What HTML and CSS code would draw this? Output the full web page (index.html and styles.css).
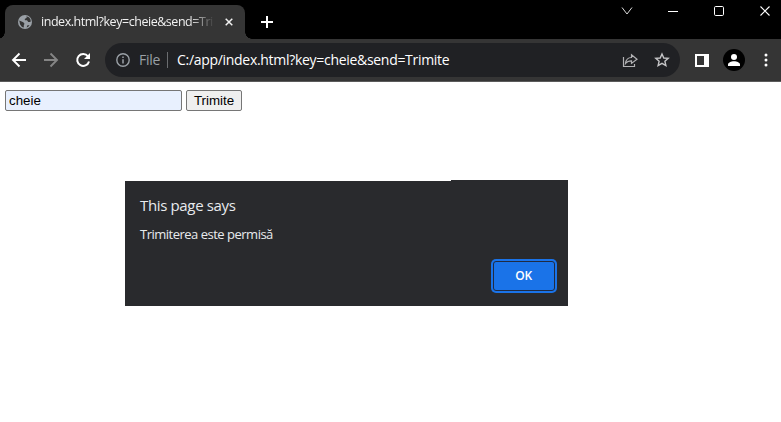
FILE: index.html
```html
<!DOCTYPE html>
<html lang="ro">
<head>
<meta charset="utf-8">
<title>index.html</title>
<link rel="stylesheet" href="styles.css">
</head>
<body>
<header class="titlebar">
  <div class="tab">
    <svg class="globe" width="14" height="14" viewBox="0 0 14 14"><circle cx="7" cy="7" r="7" fill="#9aa0a6"/><path d="M1.300 5.500l4 1.700 1.200 1.500-.7 1.500v2.300l-1.800-.6-2-2.600zM8.500 1.300l.2 1.500-2 1.200.3 1.300h2l1.200 1.600 2.300.2.200-2-1.400-2.500zM8.700 12.400l.5-1.800 2.300-.5-1.200 1.600z" fill="#353535"/></svg>
    <span class="tab-title">index.html?key=cheie&amp;send=Trimite</span>
    <svg class="tab-close" width="8" height="8" viewBox="0 0 8 8"><path d="M.7.7l6.600 6.600M7.300.7L.7 7.300" stroke="#f1f1f1" stroke-width="1.500"/></svg>
  </div>
  <svg class="new-tab" width="12" height="12" viewBox="0 0 12 12"><path d="M6 0v12M0 6h12" stroke="#fff" stroke-width="2"/></svg>
  <div class="window-controls">
    <svg width="12" height="12" viewBox="0 0 12 12"><path d="M1 2.500l5 6.500 5-6.500" fill="none" stroke="#ddd"/></svg>
    <svg width="12" height="12" viewBox="0 0 12 12"><path d="M1 6.500h10" stroke="#fff"/></svg>
    <svg width="12" height="12" viewBox="0 0 12 12"><rect x="1.500" y="1.500" width="9" height="9" rx="1.200" fill="none" stroke="#fff"/></svg>
    <svg width="12" height="12" viewBox="0 0 12 12"><path d="M1.500 1.500l9 9M10.500 1.500l-9 9" stroke="#fff" stroke-width="1.100"/></svg>
  </div>
</header>
<nav class="toolbar">
  <svg class="back" width="16" height="16" viewBox="0 0 16 16"><path d="M15 8H2M8.500 1.500L2 8l6.500 6.500" fill="none" stroke="#fff" stroke-width="1.900"/></svg>
  <svg class="forward" width="16" height="16" viewBox="0 0 16 16"><path d="M1 8h13M7.500 1.500L14 8l-6.500 6.500" fill="none" stroke="#858585" stroke-width="1.900"/></svg>
  <svg class="reload" width="16" height="16" viewBox="0 0 16 16"><path d="M13 4.300A6 6 0 1 0 14 9.500" fill="none" stroke="#fff" stroke-width="2"/><path d="M15 1v6H9z" fill="#fff"/></svg>
  <div class="omnibox">
    <svg class="info" width="14" height="14" viewBox="0 0 14 14"><circle cx="7" cy="7" r="6.200" fill="none" stroke="#9aa0a6" stroke-width="1.400"/><path d="M7 6.200v4.300M7 3.500v1.500" stroke="#9aa0a6" stroke-width="1.500"/></svg>
    <span class="scheme">File</span>
    <span class="divider"></span>
    <span class="url">C:/app/index.html?key=cheie&amp;send=Trimite</span>
    <svg class="share" width="16" height="16" viewBox="0 0 16 16"><path d="M1.500 5v9.500h11V12M3.500 11.500c.5-4 2.500-6 6-6V2.800L15 7.200l-5.500 4.200V8.800c-2.500 0-4.500.7-6 2.700z" fill="none" stroke="#b2b2b4" stroke-width="1.200"/></svg>
    <svg class="star" width="16" height="16" viewBox="0 0 16 16"><path d="M8 2l1.800 4 4.400.4-3.300 2.900 1 4.300L8 11.300l-3.900 2.300 1-4.300-3.300-2.900 4.400-.4z" fill="none" stroke="#c5c5c7" stroke-width="1.400"/></svg>
  </div>
  <svg class="panel" width="14" height="13" viewBox="0 0 14 13"><path fill="#fff" fill-rule="evenodd" d="M0 0h14v13H0zM2 2v9h7V2z"/></svg>
  <svg class="profile" width="22" height="22" viewBox="0 0 22 22"><circle cx="11" cy="11" r="11"/><circle cx="11" cy="8" r="3" fill="#fff"/><path d="M5 17v-1.500c0-2 3-3.300 6-3.300s6 1.300 6 3.300V17z" fill="#fff"/></svg>
  <svg class="more" width="4" height="14" viewBox="0 0 4 14"><g fill="#fff"><circle cx="2" cy="2" r="1.500"/><circle cx="2" cy="7" r="1.500"/><circle cx="2" cy="12" r="1.500"/></g></svg>
</nav>
<main class="page">
  <form class="search" onsubmit="return false">
    <input class="key" type="text" name="key" value="cheie">
    <button class="send" type="submit">Trimite</button>
  </form>
</main>
<section class="dialog" role="alertdialog">
  <h1 class="dialog-title">This page says</h1>
  <p class="dialog-message">Trimiterea este permisă</p>
  <button class="ok">OK</button>
</section>
</body>
</html>
```
FILE: styles.css
```css
* { box-sizing: border-box; }
body {
  margin: 0;
  height: 422px;
  overflow: hidden;
  background: #fff;
  font-family: "Open Sans", "Noto Sans", sans-serif;
}
svg { display: block; flex: none; }
.titlebar {
  display: flex;
  height: 39px;
  padding: 5px 10px 0 5px;
  background: #000;
}
.tab {
  position: relative;
  display: flex;
  align-items: center;
  width: 240px;
  height: 34px;
  padding: 0 12px 0 13px;
  border-radius: 8px 8px 0 0;
  background: #353535;
}
.tab::before, .tab::after {
  content: "";
  position: absolute;
  bottom: 0;
  width: 7px;
  height: 7px;
}
.tab::before { left: -7px; background: radial-gradient(circle at 0 0, #000 6.500px, #353535 7px); }
.tab::after { right: -7px; background: radial-gradient(circle at 100% 0, #000 6.500px, #353535 7px); }
.tab-title {
  width: 172px;
  margin-left: 9px;
  overflow: hidden;
  white-space: nowrap;
  font-size: 12.500px;
  letter-spacing: -.460px;
  line-height: 20px;
  color: #f1f1f1;
  -webkit-mask-image: linear-gradient(90deg, #000 148px, transparent 174px);
  mask-image: linear-gradient(90deg, #000 148px, transparent 174px);
}
.tab-close { margin-left: 12px; }
.new-tab { margin: 11px 0 0 16px; }
.window-controls { display: flex; gap: 34px; margin-left: auto; }
.toolbar {
  display: flex;
  align-items: center;
  height: 43px;
  padding: 0 13px 0 11px;
  background: #353535;
  border-bottom: 1px solid #5b5b5b;
}
.forward, .reload { margin-left: 16px; }
.omnibox {
  display: flex;
  align-items: center;
  width: 575px;
  height: 34px;
  margin-left: 14px;
  padding: 0 10px 0 11px;
  border-radius: 17px;
  background: #202124;
  font-size: 14px;
  letter-spacing: -.300px;
  line-height: 20px;
  white-space: nowrap;
}
.scheme { width: 28px; margin-left: 9px; color: #9aa0a6; }
.divider { width: 1px; height: 16px; background: #6b6d70; }
.url { margin-left: 9px; color: #fff; }
.share { margin-left: auto; }
.star { margin-left: 16px; }
.panel { margin-left: 15px; }
.profile { margin-left: 14px; }
.more { margin-left: auto; }
.page { padding: 8px 5px; }
.search { display: flex; gap: 4px; }
.key, .send {
  height: 21px;
  border: 1px solid #767676;
  border-radius: 2px;
  font: 13.333px "Liberation Sans", Arial, sans-serif;
  color: #000;
}
.key { width: 177px; padding: 0 3px; background: #e8f0fe; outline: none; }
.send { width: 56px; padding: 0; background: #efefef; }
.dialog {
  position: absolute;
  left: 125px;
  top: 181px;
  display: flex;
  flex-direction: column;
  width: 443px;
  height: 125px;
  padding: 14px 12px 14px 15px;
  background: #292a2d;
  color: #e8eaed;
}
.dialog::before {
  content: "";
  position: absolute;
  top: -1px;
  right: 0;
  width: 117px;
  height: 1px;
  background: #292a2d;
}
.dialog-title { margin: 0; font-size: 15px; letter-spacing: -.350px; font-weight: 400; line-height: 21px; }
.dialog-message { margin: 9px 0 0; font-size: 13px; letter-spacing: -.500px; line-height: 18px; }
.ok {
  width: 62px;
  height: 30px;
  margin: auto 1px 1px auto;
  padding: 0 1px 0 0;
  border: 1px solid #202b42;
  border-radius: 3px;
  background: #1a73e8;
  box-shadow: 0 0 0 2px #1a73e8;
  color: #fff;
  font: 600 12px/26px "Open Sans", "Noto Sans", sans-serif;
  letter-spacing: -.300px;
}
```
